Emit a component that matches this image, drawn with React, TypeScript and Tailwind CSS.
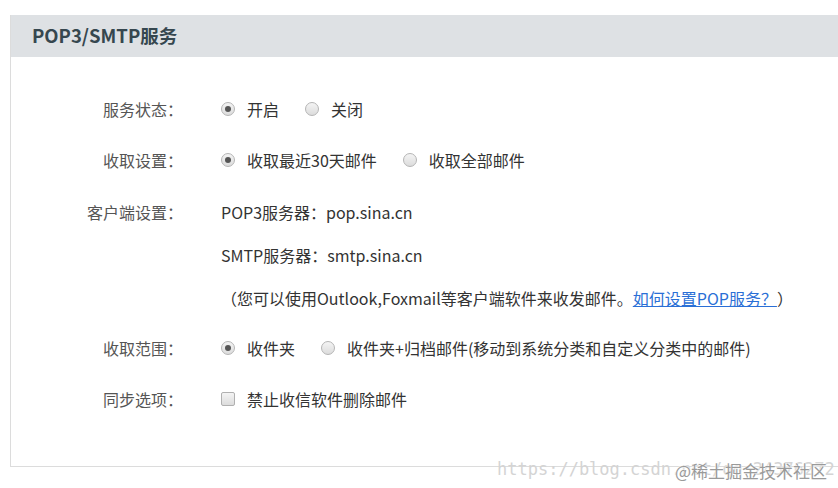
import React from "react";

const font = { fontFamily: '"Noto Sans CJK SC", "Microsoft YaHei", sans-serif' };

function Radio({ checked }: { checked?: boolean }) {
  return (
    <span className="inline-flex h-[14px] w-[14px] shrink-0 items-center justify-center rounded-full border border-[#b5b5b5] bg-gradient-to-b from-[#f4f4f4] to-[#dcdcdc]">
      {checked && <span className="h-[6px] w-[6px] rounded-full bg-[#555]" />}
    </span>
  );
}

function Row({ label, children, className = "" }: { label: string; children: React.ReactNode; className?: string }) {
  return (
    <div className={`flex h-[51px] items-center ${className}`}>
      <div className="w-[172px] shrink-0 text-right text-[#555]">{label}</div>
      <div className="ml-[38px] flex items-center">{children}</div>
    </div>
  );
}

export default function App() {
  return (
    <div className="relative h-[488px] w-[838px] overflow-hidden bg-white pl-[10px] pt-[15px] text-[16px] text-[#333]" style={font}>
      <div className="border-b border-l border-[#dcdcdc]">
        <div className="flex h-[42px] items-center bg-[#dee1e4] pl-[21px] text-[18.5px] font-bold text-[#36474f]">
          POP3/SMTP服务
        </div>
        <div className="pb-[42px] pt-[26px]">
          <Row label="服务状态：">
            <Radio checked />
            <span className="ml-[12px]">开启</span>
            <span className="ml-[26px]"><Radio /></span>
            <span className="ml-[12px]">关闭</span>
          </Row>
          <Row label="收取设置：">
            <Radio checked />
            <span className="ml-[12px]">收取最近30天邮件</span>
            <span className="ml-[26px]"><Radio /></span>
            <span className="ml-[12px]">收取全部邮件</span>
          </Row>
          <div className="mt-[5px] flex">
            <div className="flex h-[43px] w-[172px] shrink-0 items-center justify-end text-[#555]">客户端设置：</div>
            <div className="ml-[38px] flex flex-col">
              <div className="flex h-[43px] items-center">POP3服务器：pop.sina.cn</div>
              <div className="flex h-[43px] items-center">SMTP服务器：smtp.sina.cn</div>
              <div className="flex h-[43px] items-center">
                （您可以使用Outlook,Foxmail等客户端软件来收发邮件。
                <a href="#" className="text-[#2a6fd6] underline">如何设置POP服务？</a>）
              </div>
            </div>
          </div>
          <Row label="收取范围：" className="mt-[3px]">
            <Radio checked />
            <span className="ml-[12px]">收件夹</span>
            <span className="ml-[26px]"><Radio /></span>
            <span className="ml-[12px]">收件夹+归档邮件(移动到系统分类和自定义分类中的邮件)</span>
          </Row>
          <Row label="同步选项：">
            <span className="inline-block h-[14px] w-[14px] rounded-[2px] border border-[#b0b0b0] bg-gradient-to-b from-[#f4f4f4] to-[#dcdcdc]" />
            <span className="ml-[12px]">禁止收信软件删除邮件</span>
          </Row>
        </div>
      </div>
      <div className="absolute left-[497px] top-[457px] text-[17px] text-[#d4d4d4]" style={{ fontFamily: '"DejaVu Sans Mono", "Liberation Mono", monospace' }}>
        https://blog.csdn.net/qq_24376272
      </div>
      <div className="absolute left-[675px] top-[458px] text-[17px] text-[#9a9a9a]" style={{ ...font, textShadow: "0 0 2px #fff, 0 0 2px #fff" }}>
        @稀土掘金技术社区
      </div>
    </div>
  );
}
